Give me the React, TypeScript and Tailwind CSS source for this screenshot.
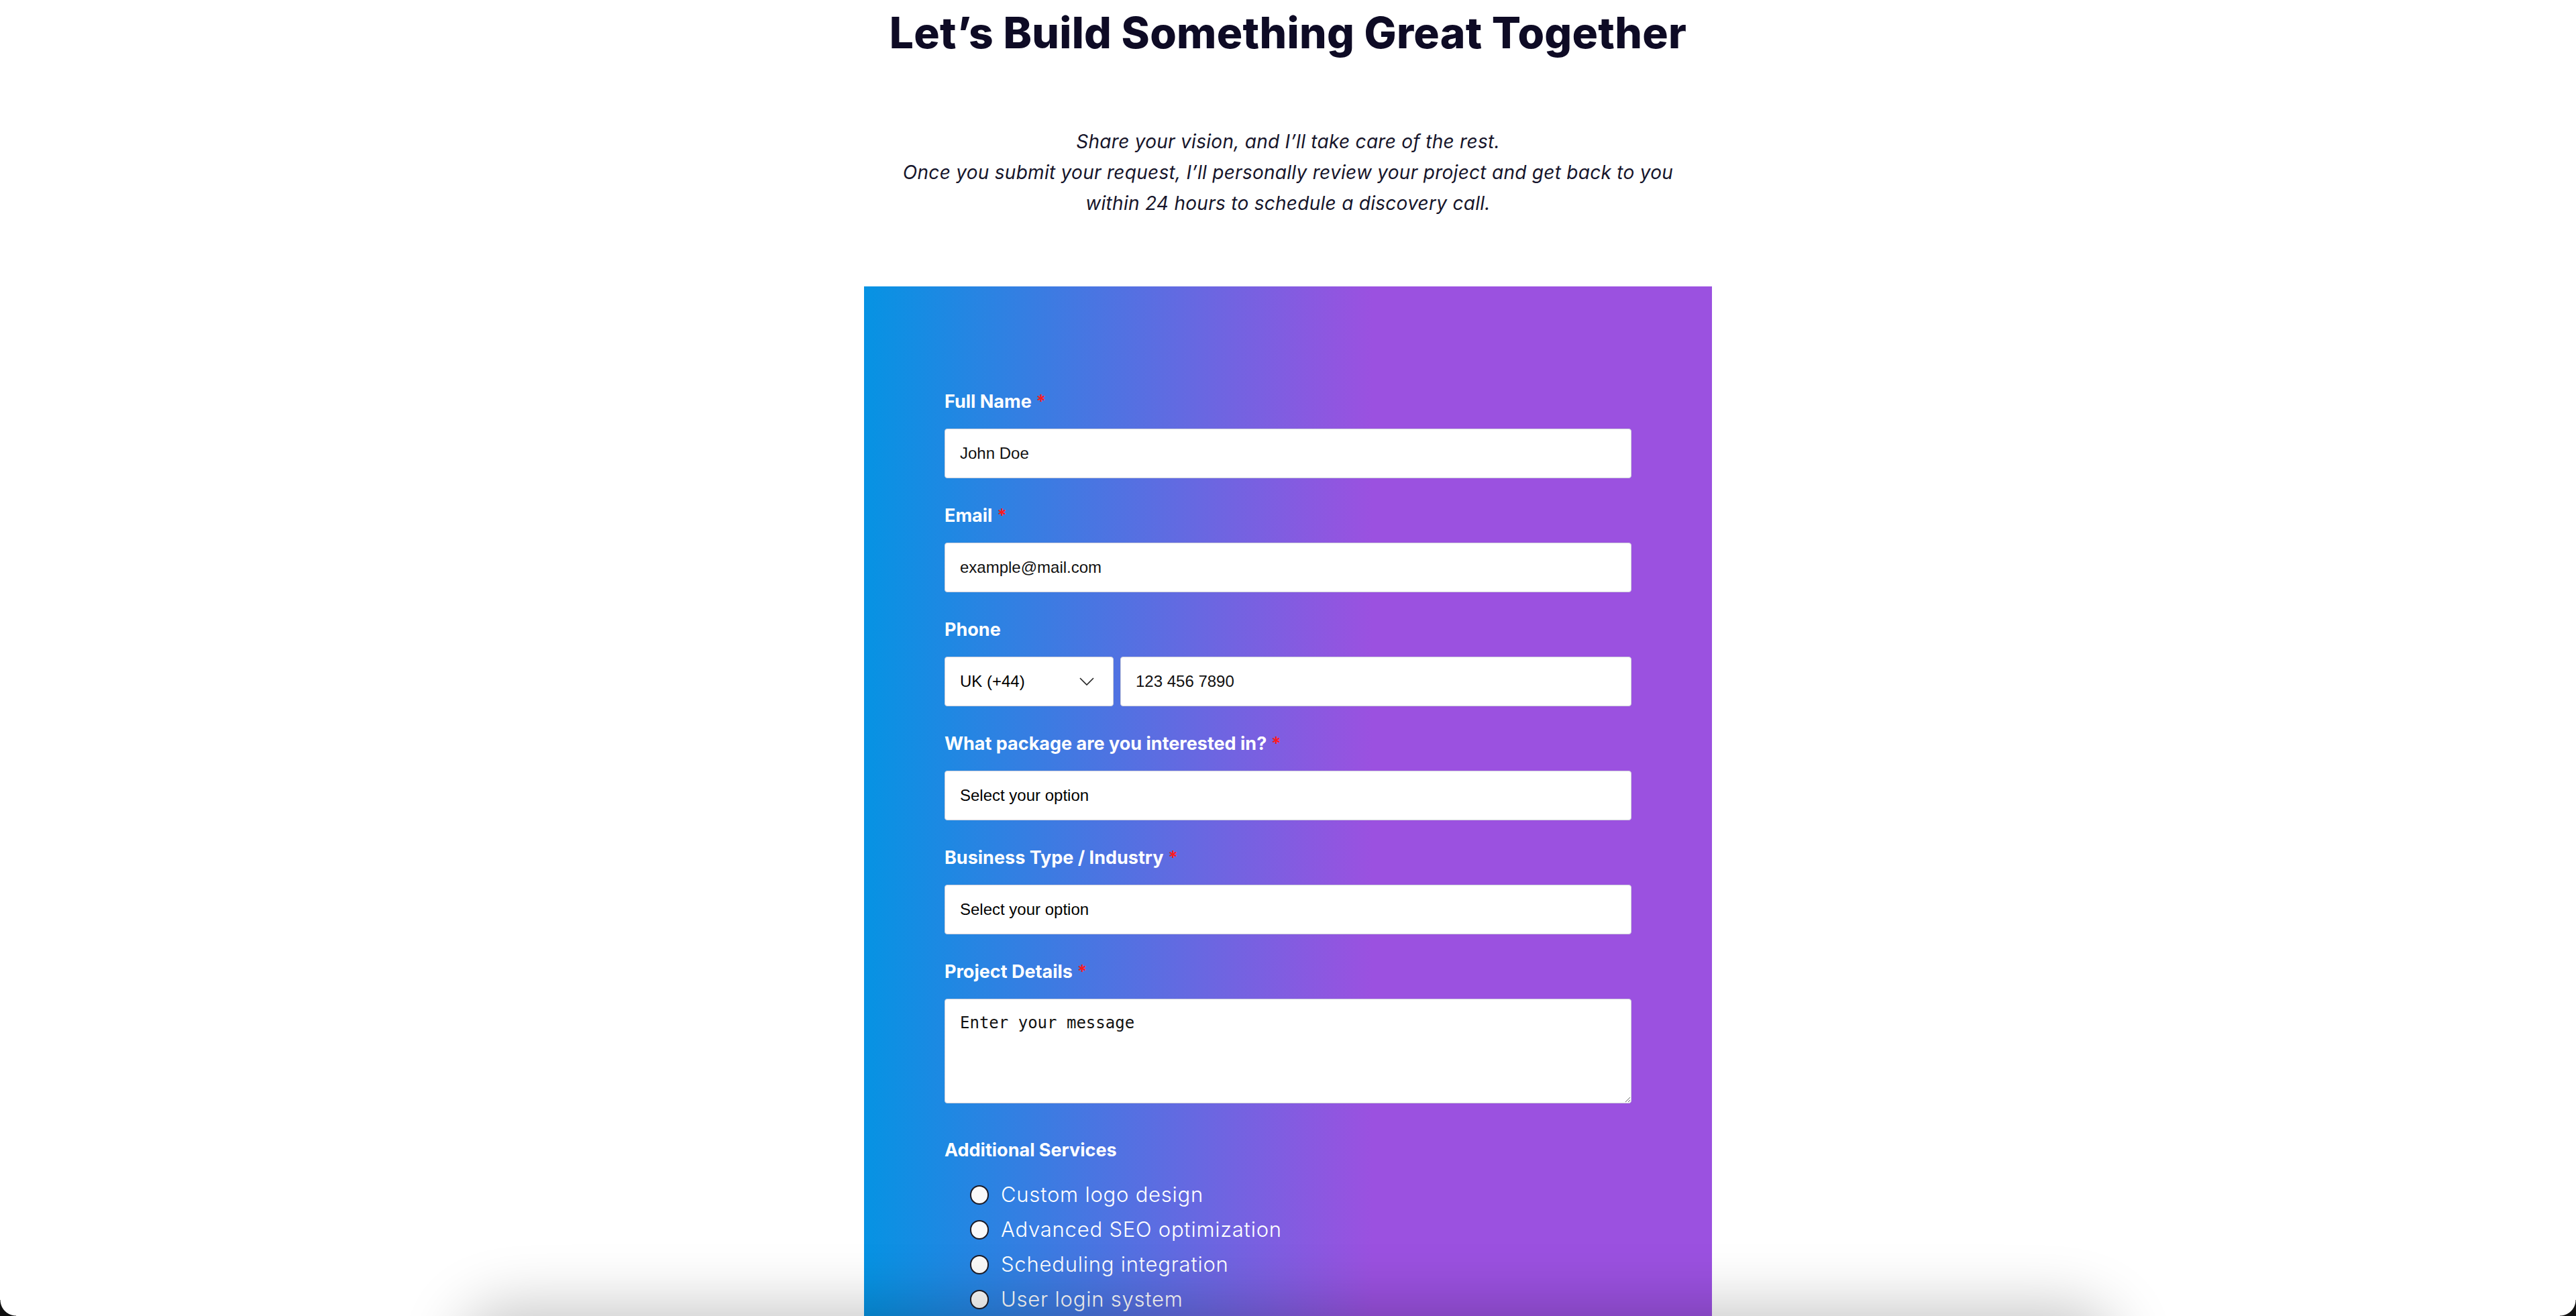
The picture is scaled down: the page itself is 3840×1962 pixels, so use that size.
import { useState } from 'react'

const services = [
    'Custom logo design',
    'Advanced SEO optimization',
    'Scheduling integration',
    'User login system',
    'Online store setup',
]

const Label = ({ text, required }: { text: string; required?: boolean }) => (
    <label className="block text-[27px] leading-[32px] font-bold text-white">
        {text}
        {required && <span className="font-semibold text-[#ff1a1a]"> *</span>}
    </label>
)

const fieldBox =
    "block w-full h-[74px] rounded-[4px] border border-[#cfd0da] bg-white px-[22px] text-[24px] text-black font-['Liberation_Sans',Arial,sans-serif] placeholder:text-[#111] outline-none"

const App = () => {
    const [picked, setPicked] = useState<string[]>([])

    const toggle = (s: string) => {
        setPicked(picked.includes(s) ? picked.filter(p => p !== s) : [...picked, s])
    }

    return (
        <div className="relative min-h-screen bg-white font-['Inter','Noto_Sans',sans-serif]">
            {/* Heading */}
            <h1 className="pt-[12px] text-center text-[64px] leading-[74px] font-extrabold tracking-[0.005em] text-[#0e0b25]">
                Let’s Build Something Great Together
            </h1>

            <div className="mt-[102px] text-center text-[28px] leading-[46px] italic tracking-[0.01em] text-[#16152b]">
                <p>Share your vision, and I’ll take care of the rest.</p>
                <p>
                    Once you submit your request, I’ll personally review your project and get back to you
                    <br />
                    within 24 hours to schedule a discovery call.
                </p>
            </div>

            {/* Form card */}
            <form className="mx-auto mt-[101px] w-[1264px] bg-[linear-gradient(90deg,#0693e3_0%,#9b51e0_60%,#9b51e0_100%)] px-[120px] pt-[156px] pb-[240px]">
                <div className="mb-[40px]">
                    <Label text="Full Name" required />
                    <input className={`mt-[24px] ${fieldBox}`} placeholder="John Doe" />
                </div>

                <div className="mb-[40px]">
                    <Label text="Email" required />
                    <input className={`mt-[24px] ${fieldBox}`} placeholder="example@mail.com" />
                </div>

                <div className="mb-[40px]">
                    <Label text="Phone" />
                    <div className="mt-[24px] flex gap-[10px]">
                        <div className="relative w-[252px] shrink-0">
                            <select className={`${fieldBox} appearance-none pr-[60px]`} defaultValue="uk">
                                <option value="uk">UK (+44)</option>
                                <option value="us">US (+1)</option>
                            </select>
                            <svg
                                className="pointer-events-none absolute right-[29px] top-[31px]"
                                width="22"
                                height="12"
                                viewBox="0 0 22 12"
                                fill="none"
                            >
                                <polyline points="1,1 11,11 21,1" stroke="#222" strokeWidth="1.6" />
                            </svg>
                        </div>
                        <input className={`flex-1 ${fieldBox}`} placeholder="123 456 7890" />
                    </div>
                </div>

                <div className="mb-[40px]">
                    <Label text="What package are you interested in?" required />
                    <select className={`mt-[24px] appearance-none ${fieldBox}`} defaultValue="">
                        <option value="">Select your option</option>
                        <option>Starter</option>
                        <option>Business</option>
                        <option>Premium</option>
                    </select>
                </div>

                <div className="mb-[40px]">
                    <Label text="Business Type / Industry" required />
                    <select className={`mt-[24px] appearance-none ${fieldBox}`} defaultValue="">
                        <option value="">Select your option</option>
                        <option>Retail</option>
                        <option>Services</option>
                        <option>Hospitality</option>
                    </select>
                </div>

                <div className="mb-[54px]">
                    <Label text="Project Details" required />
                    <textarea
                        className="mt-[24px] block h-[156px] w-full rounded-[4px] border border-[#cfd0da] bg-white px-[22px] py-[20px] font-['DejaVu_Sans_Mono',monospace] text-[24px] leading-[30px] text-black placeholder:text-[#111] outline-none"
                        placeholder="Enter your message"
                    />
                </div>

                <div>
                    <Label text="Additional Services" />
                    <ul className="mt-[24px] pl-[38px]">
                        {services.map(s => (
                            <li
                                key={s}
                                className="flex h-[52px] cursor-pointer items-center gap-[18px] text-[31px] font-light tracking-[0.025em] text-white"
                                onClick={() => toggle(s)}
                            >
                                <span
                                    className={`h-[29px] w-[28px] shrink-0 rounded-full border-2 border-[#1c1c28] ${picked.includes(s) ? 'bg-[#0a84ff]' : 'bg-[#fafafa]'}`}
                                />
                                {s}
                            </li>
                        ))}
                    </ul>
                </div>
            </form>

            {/* shadow from the element sitting just under the fold */}
            <div className="pointer-events-none fixed left-[700px] right-[700px] top-full h-[120px] rounded-[60px] shadow-[0_0_90px_16px_rgba(0,0,0,0.22)]" />

            {/* window corners */}
            <div className="pointer-events-none fixed bottom-0 left-0 h-[24px] w-[24px] bg-[radial-gradient(circle_at_100%_0%,transparent_23px,#111_24px)]" />
            <div className="pointer-events-none fixed bottom-0 right-0 h-[24px] w-[24px] bg-[radial-gradient(circle_at_0%_0%,transparent_23px,#111_24px)]" />
        </div>
    )
}

export default App
